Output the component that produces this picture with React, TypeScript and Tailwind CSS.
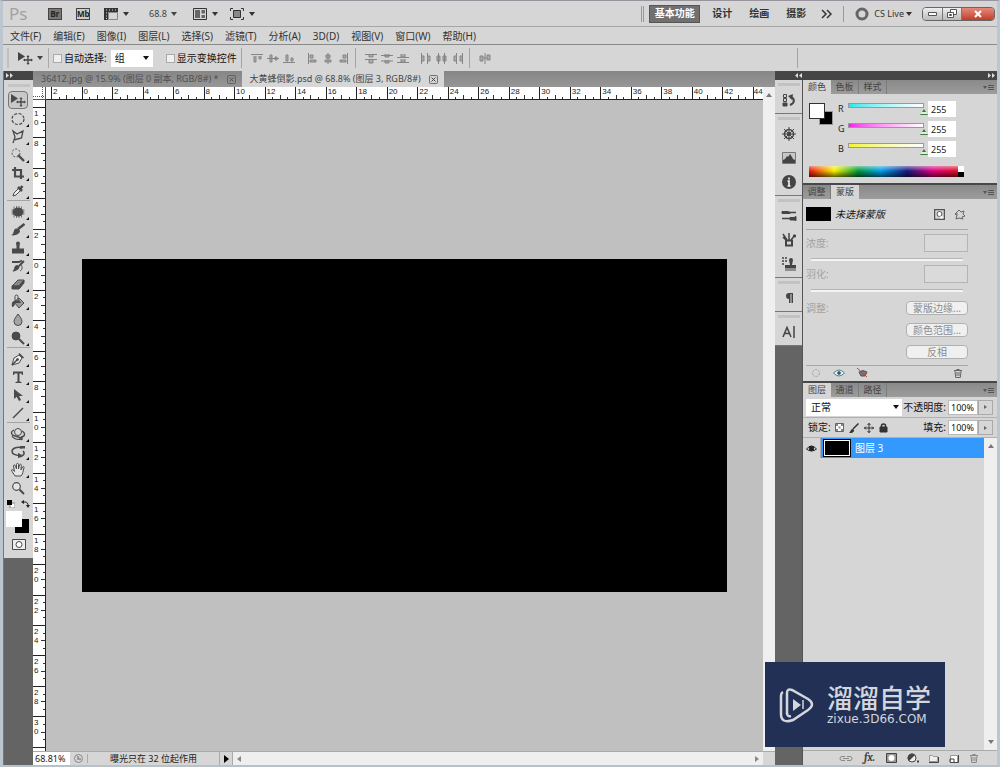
import type { ReactNode } from "react";

const menus = [
  "文件(F)", "编辑(E)", "图像(I)", "图层(L)", "选择(S)", "滤镜(T)",
  "分析(A)", "3D(D)", "视图(V)", "窗口(W)", "帮助(H)",
];

const topMarks = Array.from({ length: 23 }, (_, i) => Math.abs(i * 2 - 2));
const sideMarks = Array.from({ length: 21 }, (_, i) => Math.abs(i * 2 - 10));

function Svg({ w = 16, h = 16, children }: { w?: number; h?: number; children: ReactNode }) {
  return (
    <svg
      width={w}
      height={h}
      viewBox={`0 0 ${w} ${h}`}
      fill="none"
      stroke="currentColor"
      className="shrink-0"
      aria-hidden="true"
    >
      {children}
    </svg>
  );
}

const Down = () => (
  <Svg w={6} h={4}>
    <path d="M0 0h6L3 4z" fill="currentColor" stroke="none" />
  </Svg>
);

const MoveIcon = () => (
  <Svg>
    <path d="M1 2v9l7-4.500z" fill="currentColor" stroke="none" />
    <path d="M7.500 10h7M11 6.500v7" strokeWidth="1.300" />
    <path d="M11 5l1.600 2H9.400zM11 15l1.600-2H9.400zM6 10l2-1.600v3.200zM16 10l-2-1.600v3.200z" fill="currentColor" stroke="none" />
  </Svg>
);

const CloseIcon = () => (
  <Svg w={9} h={9}>
    <rect x=".5" y=".5" width="8" height="8" rx="1" strokeWidth=".7" />
    <path d="M2.500 2.500l4 4M6.500 2.500l-4 4" />
  </Svg>
);

const MenuIcon = () => (
  <Svg w={11} h={7}>
    <path d="M0 2h4L2 5z" fill="currentColor" stroke="none" />
    <path d="M5 1.500h6M5 3.500h6M5 5.500h6" />
  </Svg>
);

const TrashIcon = () => (
  <Svg w={10} h={10}>
    <path d="M1 2.500h8M3.500 1.500h3M2 3l.7 6.500h4.600L8 3M4 4v4M6 4v4" />
  </Svg>
);

const tools: { name: string; icon: ReactNode; single?: boolean }[][] = [
  [
    { name: "移动", icon: <MoveIcon />, single: true },
    { name: "椭圆选框", icon: <ellipse cx="8" cy="8" rx="6" ry="5.500" strokeDasharray="3 1.500" strokeWidth="1.200" /> },
    { name: "多边形套索", icon: <path d="M3 2l4 3 6-3-1.500 7L4 11l1-3zM4 11l-1 3" strokeWidth="1.300" /> },
    {
      name: "快速选择",
      icon: (
        <>
          <circle cx="6" cy="6" r="4" strokeDasharray="2 1.500" />
          <path d="M8 8l6 6" strokeWidth="2.400" />
        </>
      ),
    },
    { name: "裁剪", icon: <path d="M5 2v9.500h9M2 5h9v9" strokeWidth="2.200" /> },
    {
      name: "吸管",
      icon: (
        <>
          <path d="M3 13l1-3 5-5 2 2-5 5z" fill="#eee" />
          <path d="M8 4l4 4M10 6l2.500-3" strokeWidth="2.600" />
        </>
      ),
    },
  ],
  [
    {
      name: "修复画笔",
      icon: (
        <>
          <ellipse cx="8" cy="8" rx="5" ry="4" fill="currentColor" />
          <path d="M4 2.500v11M6.500 2v12M9 2v12M11.500 2.500v11M1.500 6h13M1.500 8h13M1.500 10h13" strokeWidth=".7" />
        </>
      ),
    },
    {
      name: "画笔",
      icon: (
        <>
          <path d="M14.500 2L8 7" strokeWidth="2.500" />
          <path d="M1 13c3-.5 2-4 4-6 2-1 5 0 5 2 0 3-6 5.500-9 4z" fill="currentColor" stroke="none" />
        </>
      ),
    },
    { name: "仿制图章", icon: <path d="M8 1.500a2 2 0 012 2L9.500 6v2.500H14v5H2v-5h4.500V6L6 3.500a2 2 0 012-2z" fill="currentColor" stroke="none" /> },
    {
      name: "历史记录画笔",
      icon: (
        <>
          <path d="M2 4h7l3-1.500M14 3L9 8" strokeWidth="1.800" />
          <path d="M2 13c3 0 1-5 5-6 3 0 3 3 1 4.500S4 14 2 13z" fill="currentColor" stroke="none" />
          <path d="M11 7c2 2 1 5-1 6" />
        </>
      ),
    },
    {
      name: "橡皮擦",
      icon: (
        <>
          <path d="M2 10l6-6h6l-5 6z" fill="#888" />
          <path d="M2 10h7l5-6v3l-5 6H2z" fill="currentColor" />
        </>
      ),
    },
    {
      name: "油漆桶",
      icon: (
        <>
          <path d="M4 8l5-4 5 5-5 5z" fill="#999" />
          <path d="M8 6V2.500a1.500 1.500 0 00-3 0V7" />
          <path d="M4 7c-3 1-2 4-2 6 2 0 3-2 3-4l6 0-2-3z" fill="currentColor" stroke="none" />
        </>
      ),
    },
    { name: "模糊", icon: <path d="M8 2c2 3 4 5 4 7.500a4 4 0 01-8 0C4 7 6 5 8 2z" fill="#a4a4a4" /> },
    {
      name: "减淡",
      icon: (
        <>
          <circle cx="6" cy="6" r="4" fill="currentColor" />
          <path d="M9 9l5 5" strokeWidth="2" />
        </>
      ),
    },
  ],
  [
    {
      name: "钢笔",
      icon: (
        <>
          <path d="M2 14l2-7 5-3 3 3-3 5z" fill="#eee" />
          <path d="M2 14l5-5M9 2.500l4.500 4.500" strokeWidth="1.500" />
          <circle cx="7.500" cy="8.500" r="1" fill="currentColor" />
        </>
      ),
    },
    {
      name: "横排文字",
      icon: <path d="M3 2.500h10v3.500h-1L11.500 4.500H9.500v8l2 .5v1h-6v-1l2-.5v-8H4.500L4 6H3z" fill="currentColor" stroke="none" />,
    },
    { name: "路径选择", icon: <path d="M4 2v10l2.700-2.300L9 14l2-1-2-4h4z" fill="currentColor" stroke="none" /> },
    { name: "直线", icon: <path d="M3 13L13 3" strokeWidth="1.500" /> },
  ],
  [
    {
      name: "3D 对象旋转",
      icon: (
        <>
          <ellipse cx="8" cy="6" rx="3.500" ry="3.500" fill="#ddd" />
          <path d="M4 4C0 6 1 9 5 10s8 2 6 4M12 5c4 2 3 6-1 6M2 10c2 3 6 4 10 3M9 12l3-1v3" strokeWidth="1.300" />
        </>
      ),
    },
    {
      name: "3D 相机旋转",
      icon: (
        <>
          <path d="M12 4C8 2 2 4 2 7.500 2 10 6 11.500 9 11.500M13 7c3 3-1 6-5 6" strokeWidth="1.500" />
          <path d="M10 2h5v2.500h-5zM8 9l4 2-4 3z" fill="currentColor" stroke="none" />
        </>
      ),
    },
    {
      name: "抓手",
      icon: <path d="M5 14c-1-2-3-4-3.500-6 1-1 2 0 3 1.500L3.500 4c0-1.500 1.500-1.500 2 0L6.500 7 6.500 2.500c0-1.500 2-1.500 2 0V7l1-4c.5-1.500 2-1 1.800.5L11 8l1.500-3c.7-1 2-.5 1.500.7C13 9 13 12 11 14z" fill="#e6e6e6" />,
    },
    {
      name: "缩放",
      icon: (
        <>
          <circle cx="6.500" cy="6.500" r="3.800" fill="#e6e6e6" strokeWidth="1.200" />
          <path d="M9.500 9.500l4.500 4.500" strokeWidth="2" />
        </>
      ),
      single: true,
    },
  ],
];

const dock: { name: string; icon: ReactNode }[][] = [
  [
    {
      name: "历史记录",
      icon: (
        <>
          <path d="M2.500 2.500h3v3h-3zM2.500 6.500h3v3h-3z" />
          <path d="M2 11h4v3H2z" fill="currentColor" />
          <path d="M9 13c5-2 5-6 1-8" strokeWidth="2" />
          <path d="M12 2l-5 2 4 4z" fill="currentColor" stroke="none" />
        </>
      ),
    },
  ],
  [
    {
      name: "导航器",
      icon: (
        <>
          <circle cx="8" cy="8" r="4.500" strokeWidth="1.500" />
          <path d="M8 1v14M1 8h14M3 3l10 10M13 3L3 13" />
          <circle cx="8" cy="8" r="1.500" fill="currentColor" />
        </>
      ),
    },
    {
      name: "直方图",
      icon: (
        <>
          <path d="M1.500 2.500h13v11h-13z" fill="#c8c8c8" stroke="#777" />
          <path d="M2 13v-3l2-1 2-3 1 1 2-3 2 3 1 2 2 1v3z" fill="currentColor" stroke="none" />
        </>
      ),
    },
    {
      name: "信息",
      icon: (
        <>
          <circle cx="8" cy="8" r="7" fill="currentColor" stroke="none" />
          <path d="M8 3.500v2M6.500 7H8v5M6.500 12h3" stroke="#eee" strokeWidth="1.700" />
        </>
      ),
    },
  ],
  [
    {
      name: "画笔",
      icon: (
        <>
          <path d="M1 3.500h6l2 1v1H1zM9 9.500h4l2-1v4l-2-.5-4 0z" fill="currentColor" />
          <path d="M8 4.500h7M1 10.500h8" strokeWidth="1.500" />
        </>
      ),
    },
    {
      name: "画笔预设",
      icon: (
        <>
          <path d="M5 8.500h6v5H5z" strokeWidth="2" />
          <path d="M6 8L2 2M8 8V1M10 8l4-5M2 5l3 3" strokeWidth="1.500" />
          <path d="M12.500 3h2v2h-2z" fill="currentColor" />
        </>
      ),
    },
    {
      name: "仿制源",
      icon: (
        <>
          <path d="M1 2h2M1 5h2M1 8h2M4 2h2M4 5h2" strokeWidth="1.500" />
          <path d="M10 2a2 2 0 012 2l-1 5h4v3.500H4V9h5L8 4a2 2 0 012-2zM4 13.500h11v1H4z" fill="currentColor" stroke="none" />
        </>
      ),
    },
  ],
  [
    {
      name: "段落",
      icon: <path d="M12 3v10h-1.500V4H9.500v9H8V9a3 3 0 010-6z" fill="currentColor" stroke="none" />,
    },
  ],
  [
    {
      name: "字符",
      icon: <path d="M2 13L6 3.500 10 13M3.500 9.500h5M13 2v12" strokeWidth="1.500" />,
    },
  ],
];

const alignGroups: ReactNode[][] = [
  [
    <path d="M0 1.500h12M3 3v6h2V3M8 3v3h2V3" />,
    <path d="M0 5.500h12M3 2v7h2V2zM8 4v3h2V4z" />,
    <path d="M0 9.500h12M3 2v6h2V2zM8 5v3h2V5z" />,
  ],
  [
    <path d="M2.500 0v11M4 2h3v3H4zM4 7h6v2H4z" />,
    <path d="M6 0v11M4 2h4v3H4zM3 7h6v2H3z" />,
    <path d="M9.500 0v11M5 2h3v3H5zM2 7h6v2H2z" />,
  ],
  [
    <path d="M0 1.500h12M0 6.500h12M4 2v2h4V2M4 7v3h4V7" />,
    <path d="M0 2.500h12M0 8h12M4 1v3h4V1M4 7v3h4V7" />,
    <path d="M0 4.500h12M0 9.500h12M4 1v3h4V1M4 6v3h4V6" />,
  ],
  [
    <path d="M1.500 0v11M7.500 0v11M2 3h2v5H2M8 3h2v5H8" />,
    <path d="M2.500 0v11M8.500 0v11M1 3h3v5H1zM7 3h3v5H7z" />,
    <path d="M4.500 0v11M10.500 0v11M4 3H2v5h2M10 3H8v5h2" />,
  ],
  [<path d="M6 0v11M1 3h3v5H1zM8 2h3v5H8zM4 5h4" />],
];

const channels = [
  { name: "R", bar: "bg-linear-to-r from-[#18e8f0] to-white" },
  { name: "G", bar: "bg-linear-to-r from-[#f018e8] to-white" },
  { name: "B", bar: "bg-linear-to-r from-[#f4f418] to-white" },
];

function PanelTabs({ tabs, active }: { tabs: string[]; active: number }) {
  return (
    <div className="flex h-[14px] shrink-0 items-stretch bg-linear-to-b from-[#8a8a8a] to-[#9c9c9c]">
      {tabs.map((tab, i) => (
        <button
          key={tab}
          className={
            i === active
              ? "w-7 bg-[#d6d6d6] text-[9px] leading-[14px] text-[#444]"
              : "w-7 border-r border-[#7c7c7c] text-[9px] leading-[14px] text-[#444]"
          }
        >
          {tab}
        </button>
      ))}
      <button aria-label="面板菜单" className="ml-auto flex items-center pr-[3px] text-[#555]">
        <MenuIcon />
      </button>
    </div>
  );
}

function TitleBar() {
  return (
    <header className="flex h-[26px] shrink-0 items-center border-b border-[#a6a6a6] pr-[2px] pl-[6px]">
      <span className="w-[39px] text-[17px] leading-5 text-[#a2a2a2]">Ps</span>
      <button className="mr-[14px] h-3 w-[14px] border border-[#444] bg-[#777] text-[8px] leading-[10px] font-bold text-[#222]">Br</button>
      <button className="mr-[14px] h-3 w-[14px] border border-[#444] bg-[#ccc] text-[8px] leading-[10px] font-bold text-[#222]">Mb</button>
      <button aria-label="查看额外内容" className="flex items-center gap-[5px] text-[#333]">
        <Svg w={14} h={12}>
          <path d="M0 0h14v4H4v8H0z" fill="currentColor" stroke="none" />
          <path d="M4.500 4.500h9v7h-9z" stroke="#888" />
          <path d="M2 2h1M5 2h1M8 2h1M11 2h1M2 5h1M2 8h1M2 10.500h1" stroke="#ddd" />
        </Svg>
        <Down />
      </button>
      <button className="ml-5 flex items-center gap-1 text-[9px] text-[#444]">
        68.8 <Down />
      </button>
      <button aria-label="排列文档" className="ml-4 flex items-center gap-[5px] text-[#333]">
        <Svg w={14} h={12}>
          <path d="M.5.500h13v11H.5z" />
          <path d="M2 2h5v8H2zM8.500 2H12v3.500H8.500zM8.500 7H12v3H8.500z" fill="#666" stroke="none" />
        </Svg>
        <Down />
      </button>
      <button aria-label="屏幕模式" className="ml-3 flex items-center gap-[5px] text-[#333]">
        <Svg w={14} h={12}>
          <path d="M3.500 2.500h7v7h-7z" fill="#888" />
          <path d="M.5 3V.500H3M11 .5h2.500V3M13.500 9v2.500H11M3 11.500H.5V9" />
        </Svg>
        <Down />
      </button>

      <div className="ml-auto flex items-center text-[10px] font-bold text-[#333]">
        <span className="mr-[5px] h-4 w-[3px] border-x border-[#999]" />
        <button className="h-[18px] w-[51px] border border-[#555] bg-[#707070] text-white">基本功能</button>
        <button className="ml-3">设计</button>
        <button className="ml-[17px]">绘画</button>
        <button className="ml-[17px]">摄影</button>
        <button aria-label="更多" className="ml-[15px]">
          <Svg w={11} h={10}>
            <path d="M1 1l4 4-4 4M6 1l4 4-4 4" strokeWidth="1.500" />
          </Svg>
        </button>
        <span className="mx-[11px] h-4 w-px bg-[#999]" />
        <button className="flex items-center text-[9px] font-normal">
          <Svg w={14} h={14}>
            <circle cx="7" cy="7" r="5" strokeWidth="3" stroke="#666" />
          </Svg>
          <span className="mr-[2px] ml-[5px]">CS Live</span>
          <Down />
        </button>
        <div className="ml-[10px] flex h-[14px] overflow-hidden rounded-sm border border-[#666] text-[#555]">
          <button aria-label="最小化" className="flex w-5 items-center justify-center border-r border-[#777] bg-linear-to-b from-[#eee] to-[#bbb]">
            <Svg w={9} h={5}>
              <path d="M.5 1.500h8v3h-8z" fill="#fff" />
            </Svg>
          </button>
          <button aria-label="还原" className="flex w-[19px] items-center justify-center border-r border-[#777] bg-linear-to-b from-[#eee] to-[#bbb]">
            <Svg w={10} h={9}>
              <path d="M3.500.500h6v5h-6z" fill="#fff" />
              <path d="M.5 3.500h6v5h-6zM2.500 5.500h2v1h-2z" fill="#fff" />
            </Svg>
          </button>
          <button aria-label="关闭" className="flex w-8 items-center justify-center bg-linear-to-b from-[#e28a7c] to-[#c23b25]">
            <Svg w={8} h={8}>
              <path d="M1 1l6 6M7 1L1 7" stroke="#fff" strokeWidth="2" />
            </Svg>
          </button>
        </div>
      </div>
    </header>
  );
}

function OptionsBar() {
  return (
    <div className="flex h-[27px] shrink-0 items-center border-t border-[#8a8a8a] px-1 text-[10px] text-[#111]">
      <span className="mr-2 h-5 w-[2px] bg-[#c0c0c0]" />
      <button aria-label="移动工具" className="flex items-center gap-1 text-[#444]">
        <MoveIcon />
        <Down />
      </button>
      <span className="mr-1 ml-[5px] h-5 w-px bg-[#aaa]" />
      <label className="flex items-center gap-[2px]">
        <input type="checkbox" className="size-[9px] appearance-none border border-[#aaa] bg-[#f0f0f0]" />
        自动选择:
      </label>
      <div className="ml-1 grid w-[42px] items-center bg-white">
        <select aria-label="自动选择对象" className="col-start-1 row-start-1 h-[17px] appearance-none pl-1 text-[10px]">
          <option>组</option>
        </select>
        <span className="pointer-events-none col-start-1 row-start-1 mr-1 justify-self-end">
          <Down />
        </span>
      </div>
      <label className="ml-[13px] flex items-center gap-[2px]">
        <input type="checkbox" className="size-[9px] appearance-none border border-[#aaa] bg-[#f0f0f0]" />
        显示变换控件
      </label>
      <div className="ml-1 flex items-center text-[#858585]">
        {alignGroups.map((group, i) => (
          <div
            key={i}
            className={
              i % 2 === 0
                ? "flex h-5 items-center gap-1 border-l border-[#a4a4a4] pl-[9px]"
                : "flex h-5 items-center gap-1 pr-[5px] pl-[11px]"
            }
          >
            {group.map((shape, j) => (
              <button key={j} aria-label="对齐">
                <Svg w={12} h={11}>
                  <g fill="#aaa">{shape}</g>
                </Svg>
              </button>
            ))}
          </div>
        ))}
      </div>
      <span className="mr-[195px] ml-auto h-5 w-px bg-[#a4a4a4]" />
    </div>
  );
}

function Toolbox() {
  return (
    <aside className="w-[29px] shrink-0 bg-[#646464]">
      <div className="flex h-[9px] items-center bg-[#454545] pl-[2px] text-[#ddd]">
        <Svg w={7} h={5}>
          <path d="M0 0l3 2.500L0 5zM4 0l3 2.500L4 5z" fill="currentColor" stroke="none" />
        </Svg>
      </div>
      <div className="bg-[#d6d6d6] pb-2 text-[#4a4a4a]">
        <div className="flex h-[11px] items-center justify-center">
          <span className="h-[3px] w-[22px] bg-[#c4c4c4]" />
        </div>
        {tools.map((group, i) => (
          <div key={i}>
            {i > 0 && (
              <div className="flex h-[3px] items-center px-[3px]">
                <span className="h-px flex-1 bg-[#a4a4a4]" />
              </div>
            )}
            {group.map((tool, j) => (
              <button
                key={tool.name}
                aria-label={tool.name}
                className={
                  i === 0 && j === 0
                    ? "mx-1 flex h-[18px] w-5 items-center justify-center rounded-sm border border-[#777] bg-[#c8c8c8]"
                    : "flex h-[18px] w-full items-end pl-[6px]"
                }
              >
                <Svg>{tool.icon}</Svg>
                {!tool.single && (
                  <Svg w={3} h={3}>
                    <path d="M3 0v3H0z" fill="#111" stroke="none" />
                  </Svg>
                )}
              </button>
            ))}
          </div>
        ))}
        <div className="flex h-[15px] items-center justify-between px-[3px] text-[#222]">
          <button aria-label="默认前景色和背景色">
            <Svg w={8} h={8}>
              <path d="M3 3h5v5H3z" fill="#fff" stroke="#888" />
              <path d="M0 0h5v5H0z" fill="#000" stroke="none" />
            </Svg>
          </button>
          <button aria-label="切换前景色和背景色">
            <Svg w={9} h={8}>
              <path d="M2 2h2c2 0 3 1 3 4" />
              <path d="M0 2l3-2v4zM5 5h4L7 8z" fill="currentColor" stroke="none" />
            </Svg>
          </button>
        </div>
        <div className="grid grid-cols-1 pl-[2px]">
          <span className="col-start-1 row-start-1 mt-2 ml-[9px] h-[14px] w-[14px] bg-black" />
          <span className="col-start-1 row-start-1 size-4 bg-white" />
        </div>
        <button aria-label="快速蒙版" className="mt-[6px] flex w-full justify-center">
          <Svg w={14} h={11}>
            <path d="M.5.500h13v10H.5z" fill="#eee" />
            <circle cx="7" cy="5.500" r="3" fill="#fff" />
          </Svg>
        </button>
      </div>
    </aside>
  );
}

function TopRuler() {
  return (
    <div className="flex h-[13px] min-w-0 flex-1 items-stretch overflow-hidden border-b border-[#222] bg-white pl-[5px] font-['Liberation_Sans',sans-serif] text-[8px] leading-[9px] text-[#222]">
      {topMarks.map((n, i) => (
        <div key={i} className="flex flex-1 flex-col justify-between border-l border-[#222]">
          <span className="h-[8px] pl-px">{n}</span>
          <span className="flex items-end justify-evenly">
            <i className="h-[2px] w-px bg-[#333]" />
            <i className="h-[4px] w-px bg-[#333]" />
            <i className="h-[2px] w-px bg-[#333]" />
          </span>
        </div>
      ))}
      <span className="w-[10px] border-l border-[#222]">44</span>
    </div>
  );
}

function SideRuler() {
  return (
    <div className="flex w-[13px] shrink-0 flex-col overflow-hidden border-r border-[#222] bg-white pt-[7px] font-['Liberation_Sans',sans-serif] text-[8px] leading-[9px] text-[#222]">
      {sideMarks.map((n, i) => (
        <div key={i} className="flex min-h-0 flex-1 justify-between border-t border-[#222]">
          <span className="pt-px pl-px">
            {String(n).split("").map((d, j) => (
              <span key={j} className="block">{d}</span>
            ))}
          </span>
          <span className="flex flex-col items-end justify-evenly">
            <i className="h-px w-[2px] bg-[#333]" />
            <i className="h-px w-[4px] bg-[#333]" />
            <i className="h-px w-[2px] bg-[#333]" />
          </span>
        </div>
      ))}
      <span className="h-1 border-t border-[#222]" />
    </div>
  );
}

function DocumentArea() {
  return (
    <main className="flex min-w-0 flex-1 flex-col">
      <div className="flex h-4 shrink-0 items-stretch bg-linear-to-b from-[#868686] to-[#969696] text-[9px]">
        <button className="flex items-center gap-2 pr-[6px] pl-2 text-[#505050]">
          36412.jpg @ 15.9% (图层 0 副本, RGB/8#) * <CloseIcon />
        </button>
        <button className="flex items-center gap-2 bg-[#d6d6d6] pr-[6px] pl-2 text-[#444]">
          大黄蜂倒影.psd @ 68.8% (图层 3, RGB/8#) <CloseIcon />
        </button>
      </div>
      <div className="flex min-h-0 flex-1">
        <div className="flex min-w-0 flex-1 flex-col">
          <div className="flex shrink-0">
            <div className="w-[13px] bg-white text-[#555]">
              <Svg w={13} h={13}>
                <path d="M0 9.500h13M9.500 0v13" strokeDasharray="1 1" />
                <path d="M12.500 0v13M0 12.500h13" />
              </Svg>
            </div>
            <TopRuler />
          </div>
          <div className="flex min-h-0 flex-1">
            <SideRuler />
            <div className="flex min-w-0 flex-1 items-center justify-center bg-[#c0c0c0]">
              <div className="aspect-[645/333] w-[90%] bg-black" />
            </div>
          </div>
        </div>
        <div className="flex w-3 shrink-0 flex-col items-center bg-[#efefef] pt-[6px] text-[#777]">
          <Svg w={6} h={4}>
            <path d="M0 4h6L3 0z" fill="currentColor" stroke="none" />
          </Svg>
        </div>
      </div>
      <footer className="flex h-[14px] shrink-0 items-center border-t border-[#aaa] bg-[#d6d6d6] text-[9px] leading-[13px] text-[#222]">
        <input aria-label="缩放比例" defaultValue="68.81%" className="h-full w-[37px] bg-white pl-[2px] text-[9px]" />
        <span className="flex w-[18px] justify-center border-r border-[#aaa] text-[#888]">
          <Svg w={9} h={9}>
            <circle cx="4.500" cy="4.500" r="4" />
            <path d="M4 2v3h3" strokeWidth="1.500" />
          </Svg>
        </span>
        <span className="w-[132px] border-r border-[#aaa] text-center">曝光只在 32 位起作用</span>
        <button aria-label="状态信息" className="flex h-full w-[12px] items-center justify-center text-black">
          <Svg w={5} h={8}>
            <path d="M0 0v8l5-4z" fill="currentColor" stroke="none" />
          </Svg>
        </button>
        <span className="flex h-full flex-1 items-center justify-between border-l border-[#aaa] bg-[#efefef] px-1 text-[#888]">
          <Svg w={4} h={6}>
            <path d="M4 0v6L0 3z" fill="currentColor" stroke="none" />
          </Svg>
          <Svg w={4} h={6}>
            <path d="M0 0v6l4-3z" fill="currentColor" stroke="none" />
          </Svg>
        </span>
        <span className="w-3" />
      </footer>
    </main>
  );
}

function Dock() {
  return (
    <nav className="w-7 shrink-0 border-r border-[#555] text-[#444]">
      {dock.map((group, i) => (
        <div key={i} className="border-b border-[#777] bg-[#d6d6d6] pb-px">
          <div className="flex h-2 items-center justify-center">
            <span className="h-[3px] w-[22px] bg-[#c2c2c2]" />
          </div>
          {group.map((item) => (
            <button key={item.name} aria-label={item.name} className="flex h-6 w-full items-center justify-center">
              <Svg>{item.icon}</Svg>
            </button>
          ))}
        </div>
      ))}
    </nav>
  );
}

function ColorPanel() {
  return (
    <section className="border-b-2 border-[#484848]">
      <PanelTabs tabs={["颜色", "色板", "样式"]} active={0} />
      <div className="h-[89px] pt-[7px] pl-[6px]">
        <div className="flex">
          <div className="grid w-[29px] content-start">
            <span className="col-start-1 row-start-1 mt-[10px] ml-[10px] size-[14px] border border-[#999] bg-black" />
            <span className="col-start-1 row-start-1 mt-[2px] size-4 border border-[#333] bg-white" />
          </div>
          <div className="flex flex-col gap-1">
            {channels.map((c) => (
              <div key={c.name} className="flex h-4 items-center text-[9px] text-[#222]">
                <label htmlFor={c.name} className="w-[6px]">{c.name}</label>
                <div className="grid w-[84px]">
                  <span className={`col-start-1 row-start-1 mx-1 h-[5px] border border-[#999] ${c.bar}`} />
                  <input
                    id={c.name}
                    type="range"
                    min="0"
                    max="255"
                    defaultValue="255"
                    className="col-start-1 row-start-1 h-3 w-full appearance-none bg-transparent [&::-webkit-slider-thumb]:mt-[6px] [&::-webkit-slider-thumb]:h-[6px] [&::-webkit-slider-thumb]:w-2 [&::-webkit-slider-thumb]:appearance-none [&::-webkit-slider-thumb]:bg-[linear-gradient(#3c7a3c_45%,#e0f0e0_45%_80%,#3c7a3c_80%)] [&::-webkit-slider-thumb]:[clip-path:polygon(50%_0,100%_100%,0_100%)]"
                  />
                </div>
                <input aria-label={`${c.name} 值`} defaultValue="255" className="h-full w-7 bg-white pl-[3px] text-[9px]" />
              </div>
            ))}
          </div>
        </div>
        <div className="mt-[9px] flex h-[11px] w-[155px]">
          <div className="grid flex-1">
            <span className="col-start-1 row-start-1 bg-[linear-gradient(to_right,#e81010,#f8f000_17%,#009838_33%,#00a0e8_48%,#181880_66%,#e00080_83%,#e01020)]" />
            <span className="col-start-1 row-start-1 bg-[linear-gradient(to_bottom,rgba(255,255,255,.5),transparent_45%,rgba(0,0,0,.6))]" />
          </div>
          <span className="w-[6px] bg-linear-to-b from-white from-50% to-black to-50%" />
        </div>
      </div>
    </section>
  );
}

function MaskPanel() {
  return (
    <section className="border-b-2 border-[#484848]">
      <PanelTabs tabs={["调整", "蒙版"]} active={1} />
      <div className="h-[182px] pr-[29px] pl-[3px] text-[10px] text-[#a2a2a2]">
        <div className="flex h-[31px] items-center border-b border-[#a8a8a8]">
          <span className="h-[14px] w-[25px] bg-black" />
          <span className="ml-1 text-[#111] italic">未选择蒙版</span>
          <button aria-label="添加像素蒙版" className="ml-auto text-[#555]">
            <Svg w={11} h={11}>
              <path d="M.5.500h10v10H.5z" strokeWidth="1.500" />
              <circle cx="5.500" cy="5" r="2.500" fill="#fff" />
              <path d="M6 7l4 1-3 2z" fill="#fff" stroke="none" />
            </Svg>
          </button>
          <button aria-label="添加矢量蒙版" className="mr-[3px] ml-[9px] text-[#666]">
            <Svg w={11} h={11}>
              <path d="M1 5h3M5 1l2 2 3-1-1 3 2 2-3 1 1 2-4-1-3 1 1-4-2-1z" />
            </Svg>
          </button>
        </div>
        {["浓度:", "羽化:"].map((label) => (
          <div key={label} className="h-[31px] pt-1">
            <div className="flex h-[18px] items-center justify-between">
              <label htmlFor={label}>{label}</label>
              <input id={label} disabled className="h-full w-11 border border-[#b4b4b4] bg-[#dadada]" />
            </div>
            <input
              type="range"
              aria-label={`${label}滑块`}
              disabled
              className="mx-[5px] mt-[6px] block h-[3px] w-[152px] appearance-none border-t border-[#b4b4b4] bg-[#f4f4f4] [&::-webkit-slider-thumb]:appearance-none"
            />
          </div>
        ))}
        <div className="flex justify-between pt-[9px]">
          <span className="leading-[14px]">调整:</span>
          <div className="flex flex-col gap-2">
            {["蒙版边缘...", "颜色范围...", "反相"].map((label) => (
              <button key={label} disabled className="h-[14px] w-[62px] rounded-sm border border-[#b0b0b0] bg-[#f0f0f0] leading-3 text-[#8c8c8c]">
                {label}
              </button>
            ))}
          </div>
        </div>
        <div className="mt-[6px] flex h-[15px] items-center gap-3 border-t border-[#a8a8a8] px-[5px]">
          <button aria-label="载入选区">
            <Svg w={10} h={10}>
              <circle cx="5" cy="5" r="3.500" strokeDasharray="2 1" />
            </Svg>
          </button>
          <button aria-label="应用蒙版" className="text-[#5a8088]">
            <Svg w={12} h={8}>
              <path d="M.5 4Q6-2 11.500 4 6 10 .5 4z" fill="#d8f4f8" />
              <circle cx="6" cy="4" r="1.500" fill="#345" />
            </Svg>
          </button>
          <button aria-label="停用蒙版" className="text-[#555]">
            <Svg w={11} h={10}>
              <path d="M2 4q4-3 8 0l-2 4H4z" fill="#777" />
              <path d="M0 0l10 9" stroke="#b44" />
            </Svg>
          </button>
          <button aria-label="删除蒙版" className="ml-auto text-[#666]">
            <TrashIcon />
          </button>
        </div>
      </div>
    </section>
  );
}

function PercentField({ label }: { label: string }) {
  return (
    <div className="ml-auto flex items-center">
      <label htmlFor={label} className="mr-[2px]">{label}</label>
      <input id={label} defaultValue="100%" className="h-[15px] w-[30px] border border-[#bbb] bg-white pl-[2px] text-[9px]" />
      <button aria-label={`${label}滑块`} className="flex h-[15px] w-[15px] items-center justify-center border border-[#aaa] text-[#666]">
        <Svg w={3} h={4}>
          <path d="M0 0v4l3-2z" fill="currentColor" stroke="none" />
        </Svg>
      </button>
    </div>
  );
}

function LayersPanel() {
  return (
    <section className="flex min-h-0 flex-1 flex-col text-[10px] text-[#111]">
      <PanelTabs tabs={["图层", "通道", "路径"]} active={0} />
      <div className="flex h-[21px] shrink-0 items-center border-b border-[#b0b0b0] pr-1 pl-[3px]">
        <div className="grid w-24 items-center bg-white">
          <select aria-label="混合模式" className="col-start-1 row-start-1 h-[17px] appearance-none pl-[5px] text-[10px]">
            <option>正常</option>
          </select>
          <span className="pointer-events-none col-start-1 row-start-1 mr-[3px] justify-self-end">
            <Down />
          </span>
        </div>
        <PercentField label="不透明度:" />
      </div>
      <div className="flex h-5 shrink-0 items-center border-b border-[#b0b0b0] pr-1 pl-[5px]">
        <span>锁定:</span>
        <div className="ml-1 flex items-center gap-[5px] text-[#333]">
          <button aria-label="锁定透明像素">
            <Svg w={9} h={9}>
              <path d="M.5.500h8v8h-8z" fill="#fff" stroke="#666" />
              <path d="M1 1h2v2H1zM6 1h2v2H6zM3.500 3.500h2v2h-2zM1 6h2v2H1zM6 6h2v2H6z" fill="#888" stroke="none" />
            </Svg>
          </button>
          <button aria-label="锁定图像像素">
            <Svg w={10} h={10}>
              <path d="M9.500.500L4 6" strokeWidth="1.500" />
              <path d="M0 10c2-1 1-4 4-4 3 2-1 5-4 4z" fill="currentColor" stroke="none" />
            </Svg>
          </button>
          <button aria-label="锁定位置">
            <Svg w={10} h={10}>
              <path d="M0 5h10M5 0v10M3.500 2L5 .5 6.500 2M3.500 8L5 9.500 6.500 8M2 3.500L.5 5 2 6.500M8 3.500L9.500 5 8 6.500" />
            </Svg>
          </button>
          <button aria-label="锁定全部">
            <Svg w={9} h={10}>
              <path d="M2.500 5V3a2 2 0 014 0v2" strokeWidth="1.500" />
              <path d="M1 4h7v5H1z" fill="currentColor" />
            </Svg>
          </button>
        </div>
        <PercentField label="填充:" />
      </div>
      <div className="flex min-h-0 flex-1">
        <div className="min-w-0 flex-1">
          <div className="flex h-5 items-stretch bg-[#3399ff] text-white">
            <button aria-label="显示图层" className="flex w-[18px] items-center justify-center border-r border-[#aaa] bg-[#d6d6d6] text-[#222]">
              <Svg w={11} h={9}>
                <path d="M.5 5Q5.500-1 10.500 5 5.500 9 .5 5z" fill="#eee" />
                <circle cx="5.500" cy="4.500" r="2.200" fill="currentColor" />
              </Svg>
            </button>
            <div className="flex items-center gap-1 pl-[2px]">
              <span className="h-[18px] w-7 border border-black bg-black outline -outline-offset-2 outline-white" />
              <span>图层 3</span>
            </div>
          </div>
        </div>
        <div className="flex w-[13px] shrink-0 flex-col items-center justify-between bg-[#efefef] py-[6px] text-[#777]">
          <Svg w={6} h={4}>
            <path d="M0 4h6L3 0z" fill="currentColor" stroke="none" />
          </Svg>
          <Down />
        </div>
      </div>
      <div className="flex h-[15px] shrink-0 items-center justify-end gap-[10px] border-t border-[#aaa] pr-[18px] text-[#444]">
        <button aria-label="链接图层" className="text-[#888]">
          <Svg w={14} h={7}>
            <path d="M6 1.500H3a2 2 0 000 4h3M8 1.500h3a2 2 0 010 4H8M4 3.500h6" />
          </Svg>
        </button>
        <button aria-label="图层样式" className="w-[13px] font-serif text-[11px] leading-3 font-bold italic">fx.</button>
        <button aria-label="图层蒙版">
          <Svg w={11} h={10}>
            <path d="M.5.500h10v9H.5z" fill="#999" />
            <circle cx="5.500" cy="5" r="3" fill="#fff" stroke="none" />
          </Svg>
        </button>
        <button aria-label="调整图层">
          <Svg w={12} h={10}>
            <circle cx="5" cy="5" r="4" fill="#eee" />
            <path d="M8 2L2 8a4.300 4.300 0 010-6 4.300 4.300 0 016 0z" fill="currentColor" stroke="none" />
            <path d="M10 8.500h2" strokeWidth="2" />
          </Svg>
        </button>
        <button aria-label="新建组">
          <Svg w={10} h={9}>
            <path d="M.5 7.500v-6h3l1 1h4v5z" fill="#eee" stroke="#999" />
            <path d="M0 8.500h9.500V3" />
          </Svg>
        </button>
        <button aria-label="新建图层">
          <Svg w={10} h={9}>
            <path d="M1.500 1.500h7v7h-7z" fill="#fff" stroke="#999" />
            <path d="M1 8.500h8.500V1M1 8V5h4v3" />
          </Svg>
        </button>
        <button aria-label="删除图层" className="text-[#888]">
          <TrashIcon />
        </button>
      </div>
    </section>
  );
}

function Watermark() {
  return (
    <div className="absolute right-[52px] bottom-[18px] flex h-[85px] w-[180px] items-center bg-[#223055] pl-[14px] text-[#d3d6dc]">
      <svg width="36" height="38" viewBox="0 0 36 38" fill="none" stroke="currentColor" className="shrink-0" aria-hidden="true">
        <path d="M8 28V7q0-5 5-3l16 9q8 5 0 11L14 34q-12 4-12-6V10q0-3 2-4" strokeWidth="2.500" />
        <path d="M8 27q0 4 4 3" strokeWidth="2.500" />
        <path d="M14 13v12l8-6z" fill="currentColor" stroke="none" />
        <path d="M24 14v9" strokeWidth="1.500" />
      </svg>
      <div className="ml-3">
        <div className="text-[26px] leading-7 font-medium">溜溜自学</div>
        <div className="font-['DejaVu_Sans',sans-serif] text-[12px] leading-[14px]">zixue.3D66.COM</div>
      </div>
    </div>
  );
}

export default function App() {
  return (
    <div className="relative flex h-screen flex-col overflow-hidden border-x-[3px] border-t border-b-2 border-x-[#bcc6d0] border-t-[#98949e] border-b-[#b8c0c8] bg-[#d6d6d6] font-['Noto_Sans','Noto_Sans_CJK_SC',sans-serif] whitespace-nowrap">
      <TitleBar />
      <nav className="flex h-[17px] shrink-0 items-center gap-3 px-[7px] text-[10px] leading-4 text-[#333]">
        {menus.map((menu) => (
          <button key={menu}>{menu}</button>
        ))}
      </nav>
      <OptionsBar />
      <div className="flex min-h-0 flex-1 border-l border-[#777]">
        <Toolbox />
        <DocumentArea />
        <div className="flex w-[222px] shrink-0 flex-col bg-[#646464]">
          <div className="flex h-[9px] shrink-0 items-center justify-between bg-[#454545] pr-[2px] pl-5 text-[#ddd]">
            <Svg w={7} h={5}>
              <path d="M3 0L0 2.500 3 5zM7 0L4 2.500 7 5z" fill="currentColor" stroke="none" />
            </Svg>
            <Svg w={7} h={5}>
              <path d="M0 0l3 2.500L0 5zM4 0l3 2.500L4 5z" fill="currentColor" stroke="none" />
            </Svg>
          </div>
          <div className="flex min-h-0 flex-1">
            <Dock />
            <div className="flex min-w-0 flex-1 flex-col bg-[#d6d6d6]">
              <ColorPanel />
              <MaskPanel />
              <LayersPanel />
            </div>
          </div>
        </div>
      </div>
      <Watermark />
    </div>
  );
}
